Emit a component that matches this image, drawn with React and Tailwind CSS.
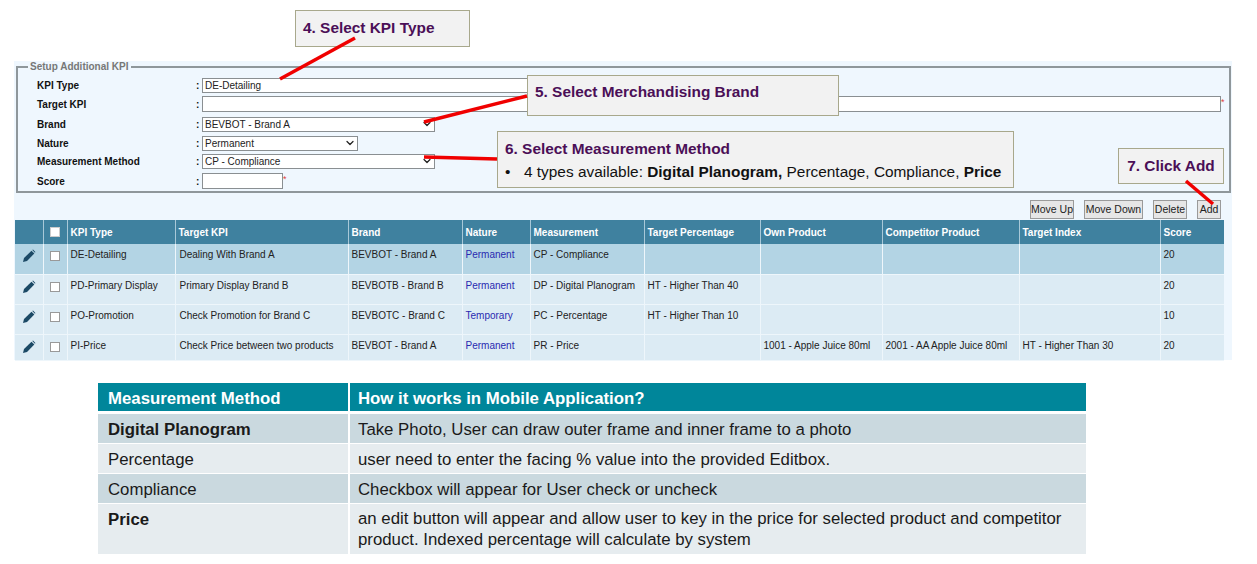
import { ChevronDown } from 'lucide-react';

const kpiRows = [
  { type: 'DE-Detailing', target: 'Dealing With Brand A', brand: 'BEVBOT - Brand A', nature: 'Permanent', method: 'CP - Compliance', pct: '', own: '', comp: '', index: '', score: '20', h: 'h-[30px]', bg: 'bg-[#b3d4e4]' },
  { type: 'PD-Primary Display', target: 'Primary Display Brand B', brand: 'BEVBOTB - Brand B', nature: 'Permanent', method: 'DP - Digital Planogram', pct: 'HT - Higher Than 40', own: '', comp: '', index: '', score: '20', h: 'h-[30px]', bg: 'bg-[#dcebf4]' },
  { type: 'PO-Promotion', target: 'Check Promotion for Brand C', brand: 'BEVBOTC - Brand C', nature: 'Temporary', method: 'PC - Percentage', pct: 'HT - Higher Than 10', own: '', comp: '', index: '', score: '10', h: 'h-[30px]', bg: 'bg-[#dcebf4]' },
  { type: 'PI-Price', target: 'Check Price between two products', brand: 'BEVBOT - Brand A', nature: 'Permanent', method: 'PR - Price', pct: '', own: '1001 - Apple Juice 80ml', comp: '2001 - AA Apple Juice 80ml', index: 'HT - Higher Than 30', score: '20', h: 'h-[26px]', bg: 'bg-[#dcebf4]' },
];

const headers = ['KPI Type', 'Target KPI', 'Brand', 'Nature', 'Measurement', 'Target Percentage', 'Own Product', 'Competitor Product', 'Target Index', 'Score'];

function PencilIcon() {
  return (
    <svg width="14" height="14" viewBox="0 0 14 14" className="mx-auto block">
      <path d="M1 13 L2 9 L9.5 1.8 L12.3 4.5 L5 12 Z" fill="#1c4a66" />
      <path d="M10.3 1 L11 .6 L13.4 3 L13 3.7 Z" fill="#1c4a66" />
    </svg>
  );
}

function FormRow({ label, children, h }) {
  return (
    <div className={`flex items-center ${h}`}>
      <div className="w-[159px] shrink-0 font-bold text-[10px] text-[#111]">{label}</div>
      <div className="w-[6px] shrink-0 font-bold text-[10px] text-[#111]">:</div>
      {children}
    </div>
  );
}

function FakeSelect({ value, w }) {
  return (
    <div className={`${w} h-[15px] shrink-0 bg-white border border-[#8a8f92] flex items-center justify-between pl-[2px] pr-[1px] text-[10px] text-[#222]`}>
      <span>{value}</span>
      <ChevronDown size={12} strokeWidth={2.5} className="text-[#222]" />
    </div>
  );
}

function Callout({ className, children }) {
  return <div className={`absolute bg-[#f2f2f2] border border-[#a8a88c] font-bold text-[15.4px] leading-[20px] text-[#4b0f57] ${className}`}>{children}</div>;
}

function ActionButton({ label, w }) {
  return <button className={`${w} h-[19px] bg-[#e6e6e6] border border-[#9a9a9a] text-[10.5px] text-[#222] whitespace-nowrap`}>{label}</button>;
}

export default function App() {
  return (
    <div className="relative w-[1257px] h-[564px] bg-white overflow-hidden font-['Liberation_Sans',Arial,sans-serif]">
      <div className="pt-[61px] pl-[14px]">
        {/* Setup panel */}
        <div className="w-[1218px] h-[299px] bg-[#eff7fe] pt-[2px]">
          <fieldset className="ml-[2px] w-[1215px] h-[130px] border-2 border-[#8f979b] px-[19px] pt-[5px] min-w-0">
            <legend className="ml-[-9px] px-[2px] text-[10px] font-bold text-[#777] leading-[8px]">Setup Additional KPI</legend>
            <FormRow label="KPI Type" h="h-[18px]">
              <div className="w-[400px] h-[15px] bg-white border border-[#8a8f92] pl-[2px] text-[10px] leading-[13px] text-[#222]">DE-Detailing</div>
            </FormRow>
            <FormRow label="Target KPI" h="h-[20px]">
              <div className="w-[1019px] h-[16px] shrink-0 bg-white border border-[#8a8f92]" />
              <span className="text-[9px] text-[#e04040] leading-none mb-[4px]">*</span>
            </FormRow>
            <FormRow label="Brand" h="h-[20px]">
              <FakeSelect value="BEVBOT - Brand A" w="w-[233px]" />
            </FormRow>
            <FormRow label="Nature" h="h-[18px]">
              <FakeSelect value="Permanent" w="w-[156px]" />
            </FormRow>
            <FormRow label="Measurement Method" h="h-[18px]">
              <FakeSelect value="CP - Compliance" w="w-[233px]" />
            </FormRow>
            <FormRow label="Score" h="h-[22px]">
              <div className="w-[81px] h-[16px] bg-white border border-[#8a8f92]" />
              <span className="text-[9px] text-[#e04040] leading-none mb-[4px]">*</span>
            </FormRow>
          </fieldset>
          <div className="flex justify-end gap-[10px] w-[1207px] mt-[7px]">
            <ActionButton label="Move Up" w="w-[44px]" />
            <ActionButton label="Move Down" w="w-[59px]" />
            <ActionButton label="Delete" w="w-[34px]" />
            <ActionButton label="Add" w="w-[24px]" />
          </div>

          {/* KPI table */}
          <table className="ml-[1px] mt-[1px] w-[1209px] table-fixed border-collapse text-[10px] text-[#222]">
            <colgroup>
              <col className="w-[28px]" />
              <col className="w-[24px]" />
              <col className="w-[108px]" />
              <col className="w-[173px]" />
              <col className="w-[114px]" />
              <col className="w-[68px]" />
              <col className="w-[114px]" />
              <col className="w-[116px]" />
              <col className="w-[122px]" />
              <col className="w-[137px]" />
              <col className="w-[141px]" />
              <col className="w-[64px]" />
            </colgroup>
            <thead>
              <tr className="h-[24px] bg-[#3f819f] text-white">
                <th className="border-r border-[#a8c8d8]" />
                <th className="border-r border-[#a8c8d8]">
                  <div className="w-[10px] h-[10px] bg-white border border-[#ccc] mx-auto" />
                </th>
                {headers.map(h => (
                  <th key={h} className="border-r border-[#a8c8d8] px-[3px] text-left font-bold last:border-r-0">{h}</th>
                ))}
              </tr>
            </thead>
            <tbody>
              {kpiRows.map(r => (
                <tr key={r.type} className={`${r.h} ${r.bg} border-b border-[#eef6fb] align-top`}>
                  <td className="border-r border-[#eef6fb] pt-[5px]">
                    <PencilIcon />
                  </td>
                  <td className="border-r border-[#eef6fb] pt-[7px]">
                    <div className="w-[10px] h-[10px] bg-white border border-[#999] mx-auto" />
                  </td>
                  <td className="border-r border-[#eef6fb] px-[3px] pt-[3px] whitespace-nowrap">{r.type}</td>
                  <td className="border-r border-[#eef6fb] px-[4px] pt-[3px] whitespace-nowrap">{r.target}</td>
                  <td className="border-r border-[#eef6fb] px-[3px] pt-[3px] whitespace-nowrap">{r.brand}</td>
                  <td className="border-r border-[#eef6fb] px-[3px] pt-[3px] whitespace-nowrap text-[#2a2ab0]">{r.nature}</td>
                  <td className="border-r border-[#eef6fb] px-[3px] pt-[3px] whitespace-nowrap">{r.method}</td>
                  <td className="border-r border-[#eef6fb] px-[3px] pt-[3px] whitespace-nowrap">{r.pct}</td>
                  <td className="border-r border-[#eef6fb] px-[3px] pt-[3px] whitespace-nowrap">{r.own}</td>
                  <td className="border-r border-[#eef6fb] px-[3px] pt-[3px] whitespace-nowrap">{r.comp}</td>
                  <td className="border-r border-[#eef6fb] px-[3px] pt-[3px] whitespace-nowrap">{r.index}</td>
                  <td className="px-[3px] pt-[3px]">{r.score}</td>
                </tr>
              ))}
            </tbody>
          </table>
        </div>
      </div>

      {/* Measurement method table */}
      <div className="ml-[98px] mt-[23px] w-[988px] text-[16.8px] text-[#1a1a1a]">
        <div className="flex h-[28px] bg-[#00869a] text-white font-bold items-center">
          <div className="w-[252px] pl-[10px] pt-[4px] border-r-2 border-white h-full flex items-center">Measurement Method</div>
          <div className="pl-[8px] pt-[4px]">How it works in Mobile Application?</div>
        </div>
        <div className="flex h-[29px] mt-[3px] bg-[#cad9df] items-center">
          <div className="w-[252px] pl-[10px] pt-[2px] font-bold border-r-2 border-white h-full flex items-center">Digital Planogram</div>
          <div className="pl-[8px] pt-[2px]">Take Photo, User can draw outer frame and inner frame to a photo</div>
        </div>
        <div className="flex h-[29px] mt-[1px] bg-[#e6ecef] items-center">
          <div className="w-[252px] pl-[10px] pt-[2px] border-r-2 border-white h-full flex items-center">Percentage</div>
          <div className="pl-[8px] pt-[2px]">user need to enter the facing % value into the provided Editbox.</div>
        </div>
        <div className="flex h-[29px] mt-[1px] bg-[#cad9df] items-center">
          <div className="w-[252px] pl-[10px] pt-[2px] border-r-2 border-white h-full flex items-center">Compliance</div>
          <div className="pl-[8px] pt-[2px]">Checkbox will appear for User check or uncheck</div>
        </div>
        <div className="flex h-[50px] mt-[1px] bg-[#e6ecef]">
          <div className="w-[252px] pl-[10px] pt-[3px] font-bold border-r-2 border-white">Price</div>
          <div className="pl-[8px] pt-[4px] leading-[21px] w-[730px]">an edit button will appear and allow user to key in the price for selected product and competitor product. Indexed percentage will calculate by system</div>
        </div>
      </div>

      {/* Annotation callouts */}
      <Callout className="left-[295px] top-[10px] w-[175px] h-[37px] pl-[7px] pt-[7px]">4. Select KPI Type</Callout>
      <Callout className="left-[527px] top-[75px] w-[312px] h-[41px] pl-[7px] pt-[6px]">5. Select Merchandising Brand</Callout>
      <Callout className="left-[497px] top-[131px] w-[517px] h-[57px] pl-[7px] pt-[7px]">
        <div>6. Select Measurement Method</div>
        <div className="flex text-[#111] font-normal mt-[3px]">
          <span className="w-[19px]">•</span>
          <span>4 types available: <b>Digital Planogram,</b> Percentage, Compliance, <b>Price</b></span>
        </div>
      </Callout>
      <Callout className="left-[1118px] top-[148px] w-[106px] h-[36px] text-center pt-[7px]">7. Click Add</Callout>

      {/* Red pointer lines */}
      <svg className="absolute left-0 top-0 pointer-events-none" width="1257" height="564">
        <g stroke="#f00000" strokeWidth="3.5" fill="none">
          <line x1="355" y1="38" x2="280" y2="79" />
          <line x1="527" y1="96" x2="424" y2="122" />
          <line x1="497" y1="159" x2="424" y2="157" />
          <line x1="1186" y1="181" x2="1213" y2="204" />
        </g>
      </svg>
    </div>
  );
}
